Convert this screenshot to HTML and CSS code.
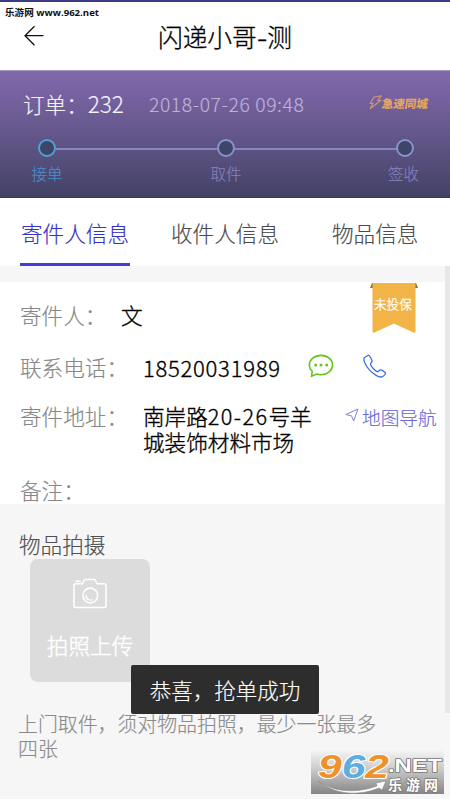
FILE: index.html
```html
<!DOCTYPE html>
<html lang="zh-CN">
<head>
<meta charset="utf-8">
<title>闪递小哥-测</title>
<link rel="stylesheet" href="styles.css">
</head>
<body>
<div class="screen">
  <header class="topbar">
    <span class="site">乐游网 www.962.net</span>
    <svg class="back" viewBox="0 0 20 22" width="20" height="22"><path d="M10.5 1.2 1 10.7l9.5 9.6M1 10.7h18.5"/></svg>
    <h1>闪递小哥<span class="dash">-</span>测</h1>
  </header>

  <section class="order">
    <div class="order-head">
      <span class="order-no">订单：<span class="order-num">232</span></span>
      <span class="order-time">2018-07-26 09:48</span>
      <span class="brand">
        <svg viewBox="0 0 13 15" width="13" height="15"><path d="M5 2 12 1 8.800 5.500l2.800.1L1 13.800l3-5.300-2.600-.1z"/></svg>
        <b>急速同城</b>
      </span>
    </div>
    <div class="steps">
      <div class="step active"><i></i><span>接单</span></div>
      <div class="line"></div>
      <div class="step"><i></i><span>取件</span></div>
      <div class="line"></div>
      <div class="step"><i></i><span>签收</span></div>
    </div>
  </section>

  <nav class="tabs">
    <a class="tab current">寄件人信息</a>
    <a class="tab">收件人信息</a>
    <a class="tab">物品信息</a>
  </nav>

  <main class="content">
    <div class="scrollbar"></div>
    <section class="card">
      <div class="ribbon">
        <svg viewBox="0 0 48 51" width="48" height="51"><path class="fold" d="M2 0h44l2 5H0z"/><path class="flag" d="M2.500 0h43v48.500q0 2-2 1L24 40.500 4.500 49.500q-2 1-2-1z"/></svg>
        <span>未投保</span>
      </div>
      <div class="row sender"><label>寄件人：</label><span class="value">文</span></div>
      <div class="row phone">
        <label>联系电话：</label><span class="value">18520031989</span>
        <svg class="chat" viewBox="0 0 26 24" width="26" height="24"><path d="M4.200 17.300C2.400 15.500 1.300 13.500 1.300 11.200 1.300 5.700 6.500 1.400 13 1.400s11.600 4.300 11.600 9.700S19.500 20.700 13 20.700c-1.600 0-3-.2-4.300-.6L3.600 22.300z"/><circle cx="7.700" cy="11" r="1.500"/><circle cx="13" cy="11" r="1.500"/><circle cx="18.700" cy="11" r="1.500"/></svg>
        <svg class="call" viewBox="0 0 24 24" width="24" height="24"><path d="M5.200 1.200 1.900 3.300C.6 4.200.9 7 2.100 9.500c2.200 4.700 6.300 9 11 11.900 2.300 1.400 4.900 2.100 6.700 1.100 1.500-.8 2.600-2.200 2.700-3.300.1-1-3.900-3.400-5.200-3.300-1 .1-1.600 1.500-2.500 1.700-2.100.3-7.200-5.200-7.300-7.700 0-.9 1.500-1.500 1.500-2.500C9.100 5.900 6.300.6 5.200 1.200z"/></svg>
      </div>
      <div class="row address">
        <label>寄件地址：</label><span class="value">南岸路<span class="num">20-26</span>号羊<br>城装饰材料市场</span>
        <a class="map"><svg viewBox="0 0 14 14" width="14" height="14"><path d="M13 1 .8 6.500l5.700 1.300L8.600 13z"/></svg>地图导航</a>
      </div>
      <div class="row remark"><label>备注：</label></div>
    </section>

    <section class="photos">
      <h2>物品拍摄</h2>
      <div class="upload">
        <svg viewBox="0 0 34 32" width="34" height="32"><path d="M2.700 6.700H9.500L11.500 2.500h10.500l2 4.200h7.300q1.700 0 1.700 1.700v20.400q0 1.700-1.700 1.700H2.700Q1 30.500 1 28.800V8.400Q1 6.700 2.700 6.700zM3.200 4.200h4"/><circle cx="17.300" cy="18.500" r="7.400"/><path d="M12.900 18.500a4.500 4.500 0 0 0 3 4.200M17.700 23h1"/></svg>
        <span>拍照上传</span>
      </div>
      <p>上门取件，须对物品拍照，最少一张最多<br>四张</p>
    </section>
  </main>

  <div class="toast">恭喜，抢单成功</div>

  <svg class="watermark" viewBox="0 0 133 44" width="133" height="44">
    <defs>
      <linearGradient id="shade" x1="0" y1="0" x2="0" y2="1"><stop offset="0" stop-color="#f5f5f5"/><stop offset=".45" stop-color="#c9c9c9"/><stop offset="1" stop-color="#858585"/></linearGradient>
    </defs>
    <rect width="133" height="44" fill="url(#shade)"/>
    <path class="swoosh" d="M7 31C24 43 47 43 66 36l-1-3 10-2-4 9-3-2C46 47 23 44 7 31z"/>
    <text class="digits" x="7" y="27.500" textLength="71" lengthAdjust="spacingAndGlyphs">9<tspan class="blue">6</tspan>2</text>
    <text class="net" x="77" y="22" textLength="54" lengthAdjust="spacingAndGlyphs">.NET</text>
    <text class="name" x="77" y="39.500" textLength="50">乐游网</text>
  </svg>
</div>
</body>
</html>
```
FILE: styles.css
```css
* { box-sizing: border-box; }
body {
  margin: 0;
  background: #fff;
  font-family: "Noto Sans CJK SC", sans-serif;
  font-weight: 300;
  -webkit-text-stroke-width: .15px;
}
h1, h2, p { margin: 0; font-weight: inherit; }
svg { display: block; fill: none; flex: none; }
.screen { position: relative; width: 450px; height: 800px; overflow: hidden; display: flex; flex-direction: column; }

.topbar { position: relative; height: 70px; flex: none; border-top: 2px solid #3c3c86; background: #fff; display: flex; justify-content: center; }
.topbar h1 { font-size: 24.700px; line-height: 36px; padding-top: 16px; color: #000; -webkit-text-stroke-width: .3px; }
.dash { display: inline-block; margin: 0 1.200px; transform: scaleX(1.250); }
.site { position: absolute; left: 5px; top: 3px; font: bold 9.600px/16px "Open Sans", "Noto Sans CJK SC", sans-serif; color: #111; white-space: nowrap; -webkit-text-stroke-width: 0; }
.back { position: absolute; left: 24px; top: 23px; stroke: #111; stroke-width: 1.300; }

.order { height: 128px; flex: none; background: linear-gradient(#8268ad, #65588c 48%, #434266); border-top: 1px solid #a394bd; border-bottom: 1px solid #39365d; }
.order-head { height: 66px; display: flex; align-items: center; padding-left: 23px; white-space: nowrap; }
.order-no { font-size: 21.600px; line-height: 30px; width: 126px; color: #f5f3fa; margin-top: -2px; }
.order-num { font-size: 22.500px; }
.order-time { font-size: 19.300px; line-height: 30px; width: 220px; color: #beb2dd; letter-spacing: .6px; margin-top: -1px; }
.brand { display: flex; align-items: center; padding-bottom: 3px; }
.brand svg { stroke: #d09478; stroke-width: 1.200; }
.brand b { font-size: 11.500px; line-height: 14px; font-weight: 900; color: #e5a55f; transform: skewX(-8deg); -webkit-text-stroke-width: 0; }
.steps { display: flex; padding: 2px 25px 0 27px; }
.step { width: 40px; flex: none; display: flex; flex-direction: column; align-items: center; color: #8580bd; font-size: 15.500px; line-height: 20px; }
.step i { width: 18px; height: 18px; border: 2px solid #8993cb; border-radius: 50%; background: #3d4568; }
.step span { margin-top: 6px; }
.step:last-child span { margin-left: -3px; }
.step.active { color: #4b8dcb; }
.step.active i { border-color: #4f9fd8; }
.line { flex: 1; height: 2px; margin: 9px -11px 0; background: #8586c1; }

.tabs { height: 68px; flex: none; display: flex; padding-left: 20px; background: #fff; }
.tab { font-size: 21.600px; line-height: 69px; color: #4b4b4b; width: 110px; height: 68px; white-space: nowrap; margin-right: 40px; padding-left: 1px; }
.tab:last-child { margin-left: 11px; margin-right: 0; }
.tab.current { color: #3232c6; border-bottom: 3px solid #3f3fdb; }

.content { position: relative; height: 533px; flex: none; padding-top: 16px; background: #f6f6f6; }
.scrollbar { position: absolute; right: 0; top: 0; width: 5px; height: 447px; background: #e7e7e7; z-index: 1; }
.card { position: relative; height: 222px; padding: 16px 0 0 20px; background: #fff; font-size: 21.600px; line-height: 26px; }
.ribbon { position: absolute; left: 370px; top: 1px; width: 48px; height: 51px; }
.ribbon .fold { fill: #8b7040; }
.ribbon .flag { fill: #f2b347; }
.ribbon span { position: absolute; left: 4px; top: 11px; font-size: 12.600px; line-height: 20px; color: #fff; white-space: nowrap; -webkit-text-stroke-width: .3px; }
.row { display: flex; align-items: flex-start; white-space: nowrap; color: #000; }
.row label { color: #888; width: 123px; }
.sender { height: 52px; padding-top: 4px; }
.sender label { width: 101px; }
.phone { height: 52px; padding-top: 4px; }
.phone .value { font-size: 22px; letter-spacing: .75px; width: 166px; }
.address { height: 71px; padding-top: 1px; }
.address .value { width: 202px; }
.num { letter-spacing: 1.450px; }
.value { -webkit-text-stroke-width: .35px; }
.chat { margin-top: 0; margin-left: -1px; }
.chat path { stroke: #65c51f; stroke-width: 1.600; }
.chat circle { fill: #65c51f; }
.call { margin: 0 0 0 29px; stroke: #3f6fdc; stroke-width: 1.300; }
.map { display: flex; gap: 3px; font-size: 18.700px; line-height: 28px; color: #6a68d2; }
.map svg { margin-top: 5px; stroke: #8484cf; }
.remark { padding-top: 4px; }

.photos { padding: 25px 19px 0; display: flex; flex-direction: column; }
.photos h2 { font-size: 21.600px; line-height: 29px; height: 30px; color: #505050; }
.upload { width: 120px; height: 123px; margin-left: 11px; border-radius: 8px; background: #dcdcdc; color: #fff; display: flex; flex-direction: column; align-items: center; font-size: 21.600px; line-height: 30px; padding-top: 18px; }
.upload svg { stroke: #fff; stroke-width: 1.600; stroke-linecap: round; stroke-linejoin: round; }
.upload span { margin-top: 21px; -webkit-text-stroke-width: .4px; }
.photos p { margin: 30px 0 0 -1px; font-size: 19.900px; line-height: 24.500px; color: #8b8b8b; white-space: nowrap; }

.toast { position: absolute; left: 131px; top: 665px; width: 188px; height: 49px; border-radius: 2px; background: #2d2d2d; color: #fff; font-size: 21.500px; line-height: 49px; text-align: center; white-space: nowrap; z-index: 2; }

.watermark { position: absolute; left: 311px; top: 750px; -webkit-text-stroke-width: 0; }
.watermark text { paint-order: stroke; stroke-linejoin: round; font-weight: 700; }
.digits { font: italic 700 33px "Liberation Sans", sans-serif; fill: #ef922b; stroke: #fff; stroke-width: 2; }
.digits .blue { fill: #5caee0; }
.net { font: 700 18px "Liberation Sans", sans-serif; fill: #fff; stroke: #777; stroke-width: 1.500; }
.name { font: 700 14px "Noto Sans CJK SC", sans-serif; fill: #fff; stroke: #777; stroke-width: 1.500; }
.swoosh { fill: #fff; stroke: #888; stroke-width: .6; }
```
